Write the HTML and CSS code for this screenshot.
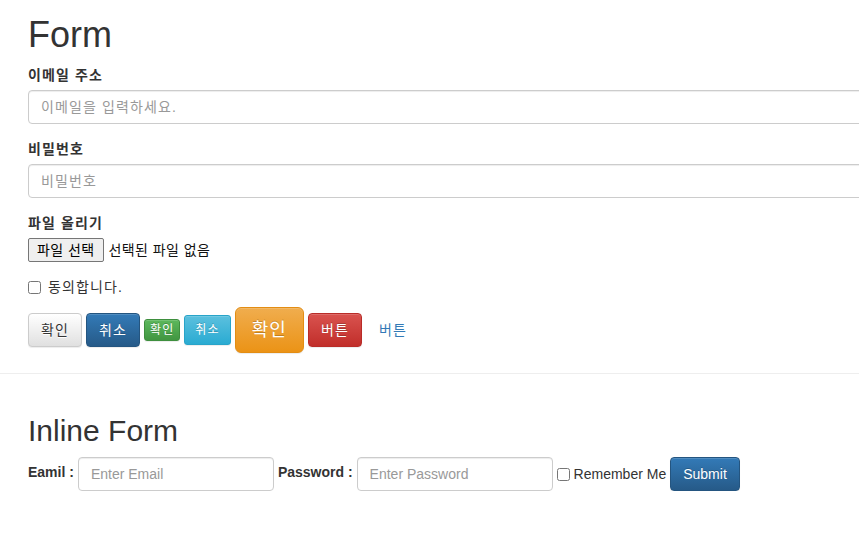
FILE: index.html
```html
<!DOCTYPE html>
<html lang="ko">
<head>
    <meta charset="UTF-8">
    <meta name="viewport" content="width=device-width, initial-scale=1.0">
    <title>Form</title>
    <link rel="stylesheet" href="styles.css">
</head>
<body>
    <!-- Stacked form -->
    <div class="container">
        <h1>Form</h1>
        <form class="form-stacked">
            <div class="form-group">
                <label for="email">이메일 주소</label>
                <input type="email" id="email" class="form-control" placeholder="이메일을 입력하세요.">
            </div>
            <div class="form-group">
                <label for="pwd">비밀번호</label>
                <input type="password" id="pwd" class="form-control" placeholder="비밀번호">
            </div>
            <div class="form-group">
                <label>파일 올리기</label>
                <div class="file-input">
                    <span class="file-button">파일 선택</span>
                    <span class="file-name">선택된 파일 없음</span>
                </div>
            </div>
            <div class="checkbox">
                <label><input type="checkbox"> 동의합니다.</label>
            </div>
            <div class="button-row">
                <button type="button" class="btn btn-default">확인</button>
                <button type="button" class="btn btn-primary">취소</button>
                <button type="button" class="btn btn-success btn-xs">확인</button>
                <button type="button" class="btn btn-info btn-sm">취소</button>
                <button type="button" class="btn btn-warning btn-lg">확인</button>
                <button type="button" class="btn btn-danger">버튼</button>
                <button type="button" class="btn btn-link">버튼</button>
            </div>
        </form>
    </div>

    <hr>

    <!-- Inline form -->
    <div class="container">
        <h2>Inline Form</h2>
        <form class="form-inline">
            <label for="inlineEmail">Eamil :</label>
            <input type="email" id="inlineEmail" class="form-control" placeholder="Enter Email">
            <label for="inlinePwd">Password :</label>
            <input type="password" id="inlinePwd" class="form-control" placeholder="Enter Password">
            <label class="remember"><input type="checkbox"> Remember Me</label>
            <button type="submit" class="btn btn-primary">Submit</button>
        </form>
    </div>
</body>
</html>
```

FILE: styles.css
```css
/* General styles */
body {
    font-family: "Liberation Sans", Arial, "Noto Sans CJK KR", sans-serif;
    font-size: 14px;
    line-height: 20px;
    color: #333;
    background-color: #fff;
    margin: 0;
    overflow: hidden;
}
.container {
    padding: 0 28px;
}
h1 {
    font-size: 36px;
    font-weight: 500;
    line-height: 40px;
    margin: 15px 0 10px;
}
h2 {
    font-size: 30px;
    font-weight: 500;
    line-height: 33px;
    margin: 40px 0 10px;
}
hr {
    border: 0;
    border-top: 1px solid #eee;
    margin: 20px 0;
}

/* Form controls */
.form-control {
    height: 34px;
    padding: 6px 12px;
    font-family: inherit;
    font-size: 14px;
    line-height: 20px;
    letter-spacing: inherit;
    color: #555;
    background-color: #fff;
    border: 1px solid #ccc;
    border-radius: 4px;
    box-shadow: inset 0 1px 1px rgba(0, 0, 0, 0.075);
    box-sizing: border-box;
    margin: 0;
}
.form-control::placeholder {
    color: #999;
}

/* Stacked form (korean text, wider hangul) */
.form-stacked {
    margin-right: -60px;
    letter-spacing: 0.08em;
}
.form-group {
    margin-bottom: 15px;
}
.form-group label {
    display: block;
    font-weight: bold;
    margin-bottom: 5px;
}
.form-stacked .form-control {
    display: block;
    width: 100%;
}
.file-input {
    display: flex;
    align-items: center;
    gap: 5px;
    height: 24px;
    letter-spacing: 0.03em;
}
.file-button {
    box-sizing: border-box;
    height: 24px;
    padding: 1px 8px;
    line-height: 20px;
    color: #000;
    background-color: #efefef;
    border: 1px solid #767676;
    border-radius: 2px;
}
.file-name {
    color: #111;
}
.checkbox {
    margin: 10px 0;
}
.checkbox label {
    display: flex;
    align-items: center;
}
.checkbox input {
    width: 13px;
    height: 13px;
    margin: 0 7px 0 0;
}

/* Buttons */
.button-row {
    display: flex;
    align-items: center;
    gap: 4px;
}
.btn {
    display: inline-block;
    padding: 6px 12px;
    font-family: inherit;
    font-size: 14px;
    line-height: 20px;
    letter-spacing: inherit;
    color: #fff;
    border: 1px solid transparent;
    border-radius: 4px;
    text-shadow: 0 -1px 0 rgba(0, 0, 0, 0.2);
    box-shadow: inset 0 1px 0 rgba(255, 255, 255, 0.15), 0 1px 1px rgba(0, 0, 0, 0.075);
    cursor: pointer;
    white-space: nowrap;
}
.btn-default {
    color: #333;
    text-shadow: 0 1px 0 #fff;
    background-image: linear-gradient(to bottom, #fff 0, #e0e0e0 100%);
    border-color: #ccc;
}
.btn-primary {
    background-image: linear-gradient(to bottom, #337ab7 0, #265a88 100%);
    border-color: #245580;
}
.btn-success {
    background-image: linear-gradient(to bottom, #5cb85c 0, #419641 100%);
    border-color: #3e8f3e;
}
.btn-info {
    background-image: linear-gradient(to bottom, #5bc0de 0, #2aabd2 100%);
    border-color: #28a4c9;
}
.btn-warning {
    background-image: linear-gradient(to bottom, #f0ad4e 0, #eb9316 100%);
    border-color: #e38d13;
}
.btn-danger {
    background-image: linear-gradient(to bottom, #d9534f 0, #c12e2a 100%);
    border-color: #b92c28;
}
.btn-link {
    color: #337ab7;
    background: none;
    text-shadow: none;
    box-shadow: none;
}
.btn-lg {
    padding: 10px 16px;
    font-size: 18px;
    line-height: 24px;
    border-radius: 6px;
}
.btn-sm {
    padding: 5px 10px;
    font-size: 12px;
    line-height: 18px;
    border-radius: 3px;
}
.btn-xs {
    padding: 1px 5px;
    font-size: 12px;
    line-height: 18px;
    border-radius: 3px;
}

/* Inline form */
.form-inline {
    display: flex;
    align-items: center;
    gap: 4px;
}
.form-inline label {
    font-weight: bold;
    margin-bottom: 5px;
}
.form-inline .form-control {
    width: 196px;
}
.form-inline .remember {
    display: flex;
    align-items: center;
    gap: 4px;
    font-weight: normal;
    margin: 0;
}
.remember input {
    width: 13px;
    height: 13px;
    margin: 0;
}
```
